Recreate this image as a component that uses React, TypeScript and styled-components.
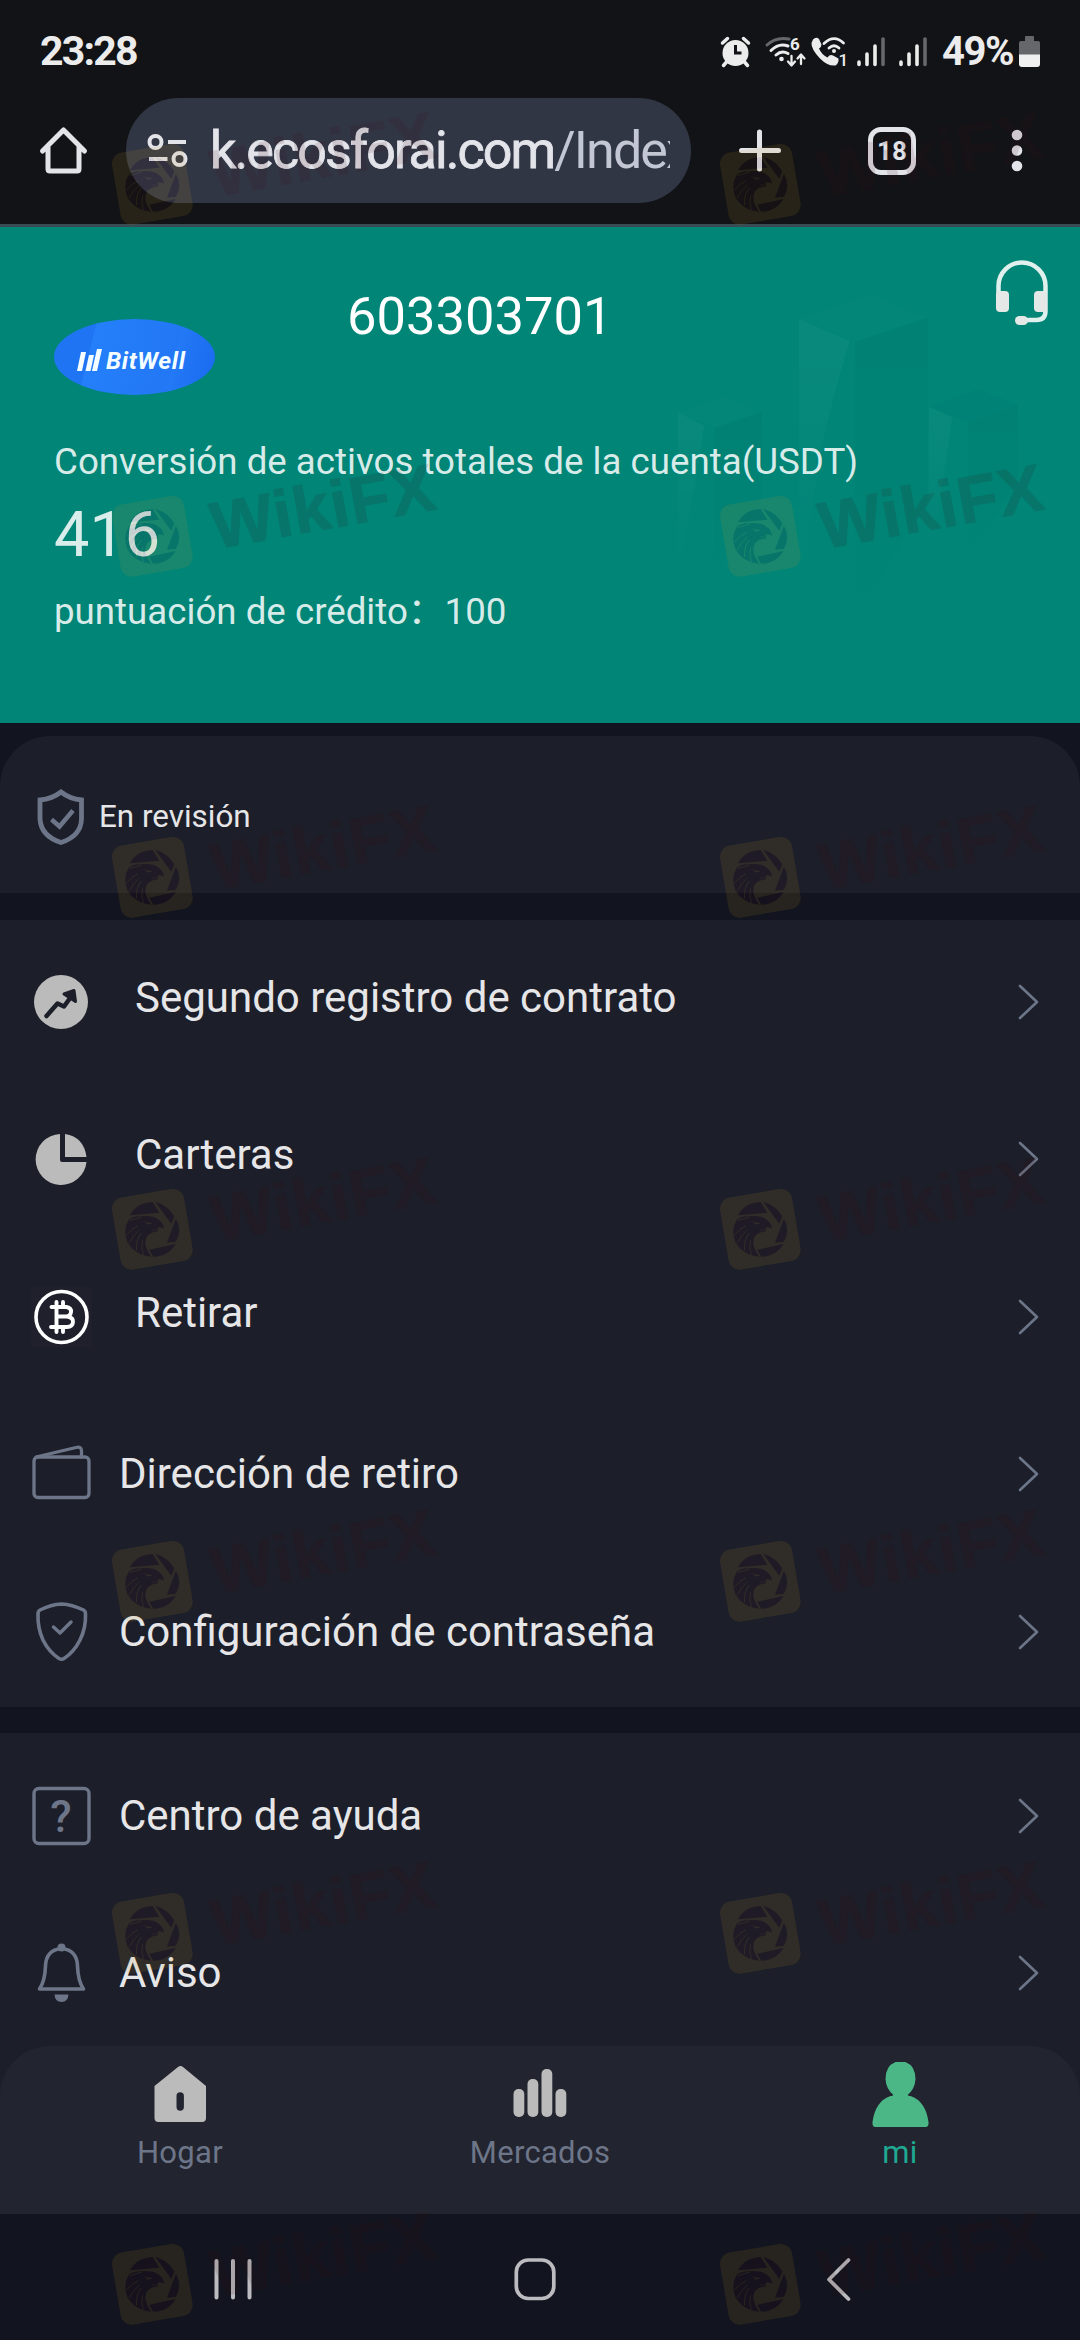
import React from "react";
import styled, { createGlobalStyle } from "styled-components";

const GlobalStyle = createGlobalStyle`
  html, body { margin: 0; padding: 0; background: #12141f; }
  *, *::before, *::after { box-sizing: border-box; }
`;

const slate = "#6d7689";
const light = "#ececec";

const Screen = styled.div`
  position: relative;
  display: flex;
  flex-direction: column;
  width: 1080px;
  height: 2340px;
  overflow: hidden;
  background: #12141f;
  color: #e6e6e8;
  font-family: Roboto, "Noto Sans CJK SC", sans-serif;
`;

/* Every drawing is given by its window on the screen canvas: "x y width height". */
const Svg = styled.svg`
  display: block;
  flex: none;
  overflow: visible;
`;

type ArtProps = { box: string; children: React.ReactNode };
const Art = ({ box, children }: ArtProps) => {
  const [, , w, h] = box.split(" ");
  return (
    <Svg viewBox={box} width={w} height={h} fill="none" strokeLinecap="round" strokeLinejoin="round">
      {children}
    </Svg>
  );
};

/* ---------- system status bar ---------- */

const StatusBar = styled.header`
  display: flex;
  align-items: flex-start;
  height: 98px;
  padding: 36px 40px 0 40px;
  background: #121316;
`;

const Clock = styled.span`
  flex: 1;
  font-size: 41px;
  font-weight: 700;
  line-height: 31px;
  letter-spacing: -1.8px;
  color: ${light};
`;

const StatusGroup = styled.div<{ $gap: number }>`
  display: flex;
  margin-right: ${(p) => p.$gap}px;
`;

const Percent = styled.span`
  width: 77px;
  font-size: 40px;
  font-weight: 700;
  line-height: 31px;
  letter-spacing: -1.4px;
  color: ${light};
`;

const Signal = () => (
  <Art box="856 36 28 32">
    <g strokeWidth="3.6" stroke={light}>
      <path d="M858 62v2.500M866 54v10.500M874 46v18.500" />
      <path d="M882 39v25.500" stroke="#66676a" />
    </g>
  </Art>
);

/* ---------- browser toolbar ---------- */

const Toolbar = styled.div`
  display: flex;
  align-items: center;
  height: 129px;
  padding: 0 57px 21px 38px;
  background: #121316;
  border-bottom: 3px solid #3a4c53;
`;

const AddressPill = styled.div`
  display: flex;
  align-items: center;
  width: 565px;
  height: 105px;
  margin: 0 48px 0 37px;
  padding: 0 21px;
  border-radius: 53px;
  background: #313645;
`;

const Address = styled.div`
  width: 460px;
  margin-left: 21px;
  overflow: hidden;
  white-space: nowrap;
  font-size: 52px;
  line-height: 70px;
  letter-spacing: -1.9px;
  color: #c3c6d3;
`;

const Domain = styled.span`
  color: #e3e3ea;
  -webkit-text-stroke: 0.8px #e3e3ea;
`;

const TabCount = styled.div`
  display: flex;
  align-items: center;
  justify-content: center;
  width: 48px;
  height: 48px;
  margin: 0 95px 0 87px;
  border: 5px solid #e3e3ea;
  border-radius: 13px;
  font-size: 26px;
  font-weight: 700;
  color: #e3e3ea;
`;

/* ---------- account header ---------- */

const Account = styled.section`
  position: relative;
  height: 496px;
  padding-left: 54px;
  background: #008577;
`;

const Skyline = styled.div`
  position: absolute;
  left: 660px;
  top: 50px;
`;

const AccountTop = styled.div`
  position: relative;
  display: flex;
  align-items: flex-start;
  height: 192px;
  padding-right: 31px;
`;

const Brand = styled.div`
  display: flex;
  align-items: center;
  width: 161px;
  height: 76px;
  margin-top: 92px;
  padding: 7px 0 0 22px;
  border-radius: 50%;
  background: linear-gradient(104deg, #1f74f4 24%, #257ffa 24.500%, #2277f5 72%, #2379f6 72.500%, #1a69ee 100%);
`;

const BrandName = styled.span`
  margin-left: 4px;
  font-size: 24.500px;
  font-style: italic;
  font-weight: 700;
  line-height: 26px;
  letter-spacing: 0.6px;
  color: #f4fdff;
`;

const UserId = styled.div`
  flex: 1;
  margin: 59px 0 0 132px;
  font-size: 52.500px;
  line-height: 61px;
  color: #fff;
`;

const Support = styled.div`
  margin-top: 33px;
`;

const AccountText = styled.div<{ $size: number; $line: number; $top: number }>`
  position: relative;
  margin-top: ${(p) => p.$top}px;
  font-size: ${(p) => p.$size}px;
  line-height: ${(p) => p.$line}px;
  white-space: nowrap;
  color: rgba(255, 255, 255, 0.85);
`;

/* ---------- menu ---------- */

const Review = styled.section`
  display: flex;
  align-items: center;
  height: 157px;
  margin-top: 13px;
  padding: 4px 0 0 32px;
  border-radius: 50px 50px 0 0;
  background: #1c1e29;
`;

const ReviewLabel = styled.span`
  margin-left: 7px;
  font-size: 31.400px;
`;

const Menu = styled.nav<{ $height: number; $gap: number; $pad: number }>`
  height: ${(p) => p.$height}px;
  margin-top: ${(p) => p.$gap}px;
  padding-top: ${(p) => p.$pad}px;
  background: #1c1e29;
`;

const Row = styled.div`
  display: flex;
  align-items: center;
  height: 157.500px;
  padding: 0 41px 0 31px;
`;

const RowLabel = styled.span<{ $inset?: boolean }>`
  flex: 1;
  margin-left: ${(p) => (p.$inset ? 43 : 27)}px;
  padding-bottom: ${(p) => (p.$inset ? 8 : 0)}px;
  font-size: 42px;
  line-height: 50px;
`;

const Chevron = () => (
  <Art box="1016 984 23 36">
    <path d="M1020 986l17 16-17 16" stroke={slate} strokeWidth="2.6" />
  </Art>
);

/* ---------- tab bar and system navigation ---------- */

const TabBar = styled.nav`
  position: relative;
  display: grid;
  grid-template-columns: repeat(3, 1fr);
  flex: none;
  height: 168px;
  border-radius: 50px 50px 0 0;
  background: #22242f;
`;

const TabCorner = styled.div`
  background: #1c1e29;
`;

const Tab = styled.div<{ $active?: boolean }>`
  display: flex;
  flex-direction: column;
  align-items: center;
  padding-top: 15px;
  font-size: 31px;
  line-height: 40px;
  letter-spacing: 0.3px;
  color: ${(p) => (p.$active ? "#1fa992" : slate)};
`;

const TabLabel = styled.span`
  margin-top: 4px;
`;

const SystemNav = styled.footer`
  display: flex;
  height: 126px;
  padding: 42px 0 0 212px;
  background: #12141f;
`;

const NavKey = styled.div<{ $gap: number }>`
  margin-right: ${(p) => p.$gap}px;
`;

/* ---------- watermark ---------- */

const Mark = styled.svg<{ $x: number; $y: number }>`
  position: absolute;
  left: ${(p) => p.$x}px;
  top: ${(p) => p.$y - 50}px;
  pointer-events: none;
  overflow: visible;
`;

const blades =
  "M84 187Q103 150 152 147L172 179ZM160 147Q197 156 217 190L208 213ZM222 197Q241 233 222 266L195 269ZM142 290L221 273Q198 311 153 311Z";
const eagle =
  "M80 200Q96 189 116 190Q134 187 156 192Q182 203 187 227Q178 222 166 223Q172 229 166 236Q145 236 135 250Q126 266 133 284Q138 298 147 311Q98 306 76 267Q62 231 80 200Z";
const streaks = "M120 192Q92 200 82 203M108 218Q88 228 74 246M112 231Q92 248 82 270M118 240Q100 262 104 292M122 262Q116 282 124 306";

const Watermark = ({ x, y }: { x: number; y: number }) => {
  const hole = `hole-${x}-${y}`;
  const solid = `solid-${x}-${y}`;
  const shapes = (on: string, off: string) => (
    <>
      <path d={blades} fill={on} />
      <path d={eagle} fill={on} />
      <path d={streaks} stroke={off} strokeWidth="3" fill="none" />
      <path d="M128 205Q138 211 152 209Q144 217 134 213Z" fill={off} />
      <path d="M150 231L172 231" stroke={off} strokeWidth="2" />
    </>
  );
  return (
    <Mark $x={x} $y={y} width="345" height="138" viewBox="0 -50 345 138">
      <defs>
        <mask id={hole} maskUnits="userSpaceOnUse" x="0" y="0" width="400" height="500">
          <rect width="400" height="500" fill="#fff" />
          {shapes("#000", "#fff")}
        </mask>
        <mask id={solid} maskUnits="userSpaceOnUse" x="0" y="0" width="400" height="500">
          {shapes("#fff", "#000")}
        </mask>
      </defs>
      <g transform="scale(.33333) translate(-30 -108)">
        <g mask={`url(#${hole})`}>
          <rect x="41.500" y="119.500" width="219" height="219" rx="34" transform="rotate(-9.700 151 229)" fill="rgba(195,154,40,.12)" />
        </g>
        <g mask={`url(#${solid})`}>
          <rect x="40" y="120" width="220" height="220" fill="rgba(60,12,15,.12)" />
        </g>
      </g>
      <g opacity=".12" transform="translate(103.500 53) rotate(-10.200)">
        <text
          fontFamily="Liberation Sans, Arial, sans-serif"
          fontWeight="700"
          fontSize="66"
          fill="#3c0c0f"
          stroke="#3c0c0f"
          strokeWidth="1.200"
          strokeLinejoin="round"
          textLength="226"
        >
          WikiFX
        </text>
      </g>
    </Mark>
  );
};

const App = () => (
  <Screen>
    <GlobalStyle />
    <StatusBar>
      <Clock>23:28</Clock>
      <StatusGroup $gap={15}>
        <Art box="721 36 29 32">
          <circle cx="735.500" cy="53" r="13" fill={light} />
          <path d="M722.500 43l5-4.500M748.500 43l-5-4.500M726.500 62l-3 3.500M744.500 62l3 3.500" stroke={light} strokeWidth="3.500" />
          <path d="M735.500 45v8h6" stroke="#121316" strokeWidth="3" strokeLinecap="butt" strokeLinejoin="miter" />
        </Art>
      </StatusGroup>
      <StatusGroup $gap={5}>
        <Art box="765 36 41 32">
          <path d="M767 45Q776 36.500 789 39" stroke="#66676a" strokeWidth="3" />
          <path d="M771 50.500Q779 42.500 788 46M776 55Q781.500 50 788 53.500" stroke={light} strokeWidth="3" />
          <circle cx="781.500" cy="59" r="2.300" fill={light} />
          <path d="M791.500 56v9M788 61.500l3.500 4 3.500-4M801 64v-9M797.500 58.500l3.500-4 3.500 4" stroke={light} strokeWidth="2.300" />
          <text x="790" y="50" fontSize="17" fontWeight="700" fill={light}>6</text>
        </Art>
      </StatusGroup>
      <StatusGroup $gap={10}>
        <Art box="810 36 36 32">
          <path d="M812 39.500Q815 36.500 818 39L820.500 44.500Q820.500 47 818 48.500Q820.500 54.500 826.500 57.500Q829 54 832 55.500L837.500 58.500Q838 63 834.500 65.500Q827 66.500 819 58.500Q810 49 810.500 43Z" fill={light} />
          <path d="M823 43.500Q833 34 842.500 43M828 48Q833 43.500 838 48" stroke={light} strokeWidth="2.800" />
          <circle cx="833" cy="51" r="2" fill={light} />
          <text x="837.500" y="65.500" fontSize="17" fontWeight="500" fill={light}>1</text>
        </Art>
      </StatusGroup>
      <StatusGroup $gap={14}>
        <Signal />
      </StatusGroup>
      <StatusGroup $gap={15}>
        <Signal />
      </StatusGroup>
      <Percent>49%</Percent>
      <Art box="1019 36 21 32">
        <path d="M1025 37q0-1 1-1h7q1 0 1 1v4h4q2 0 2 2v12h-21V43q0-2 2-2h4Z" fill="#66676a" />
        <path d="M1019 54.500h21V64q0 3-3 3h-15q-3 0-3-3Z" fill="#f0f0f0" />
      </Art>
    </StatusBar>

    <Toolbar>
      <Art box="38 125 51 51">
        <path d="M42.500 151L63.500 130l21 21M48 147v22q0 2 2 2h27q2 0 2-2v-22" stroke="#e3e3ea" strokeWidth="5" />
      </Art>
      <AddressPill>
        <Art box="147 132 42 38">
          <g stroke="#e3e3ea" strokeWidth="4" strokeLinecap="butt">
            <circle cx="155.500" cy="142" r="6" />
            <path d="M168 142h18M149 159h18.500" />
            <circle cx="179.500" cy="159" r="6" />
          </g>
        </Art>
        <Address>
          <Domain>k.ecosforai.com</Domain>/Index
        </Address>
      </AddressPill>
      <Art box="739 129 42 43">
        <path d="M741.500 150.500h37M759.500 132v37" stroke="#e3e3ea" strokeWidth="5" />
      </Art>
      <TabCount>18</TabCount>
      <Art box="1011 127 12 47">
        <g fill="#e3e3ea">
          <circle cx="1017" cy="135" r="5.300" />
          <circle cx="1017" cy="150.500" r="5.300" />
          <circle cx="1017" cy="166" r="5.300" />
        </g>
      </Art>
    </Toolbar>

    <Account>
      <Skyline>
        <Art box="660 277 380 350">
          <defs>
            <linearGradient id="lit" x1="0" y1="0" x2="0" y2="1">
              <stop offset="0" stopColor="#fff" stopOpacity=".035" />
              <stop offset="1" stopColor="#fff" stopOpacity="0" />
            </linearGradient>
            <linearGradient id="shade" x1="0" y1="0" x2="0" y2="1">
              <stop offset="0" stopColor="#003c30" stopOpacity=".06" />
              <stop offset="1" stopColor="#003c30" stopOpacity="0" />
            </linearGradient>
          </defs>
          <path d="M799 319L871 294L925 318L855 342Z" fill="#fff" fillOpacity=".012" />
          <path d="M799 319L850 341Q834 390 820 455L799 590Z" fill="url(#lit)" />
          <path d="M855 342L928 318V500L855 620Z" fill="url(#shade)" />
          <path d="M678 412L726 396L760 412L714 428Z" fill="#fff" fillOpacity=".01" />
          <path d="M678 412L704 426L696 480L678 575Z" fill="url(#lit)" />
          <path d="M714 428L762 412V500L714 580Z" fill="url(#shade)" />
          <path d="M929 407L978 389L1018 405L968 422Z" fill="#003c30" fillOpacity=".015" />
          <path d="M929 407L952 417Q946 470 929 560Z" fill="url(#lit)" />
          <path d="M968 422L1018 405V480L968 560Z" fill="url(#shade)" />
        </Art>
      </Skyline>
      <AccountTop>
        <Brand>
          <Art box="76 349 26 23">
            <path d="M81 352h5l-4 19h-5ZM89 355h5l-3.500 16h-5ZM97 349h5l-5 22h-5Z" fill="#f4fdff" />
          </Art>
          <BrandName>BitWell</BrandName>
        </Brand>
        <UserId>603303701</UserId>
        <Support>
          <Art box="995 260 54 67">
            <path d="M998.500 298V286a23.500 23.500 0 0 1 47 0V311q0 9-9 9h-13" stroke="#dff0ed" strokeWidth="4.500" strokeLinecap="butt" />
            <rect x="996" y="291" width="13" height="21" rx="4" fill="#e4e8e7" />
            <rect x="1034" y="291" width="13" height="21" rx="4" fill="#e4e8e7" />
            <rect x="1015" y="316" width="13" height="9" rx="4.500" fill="#e4e8e7" />
          </Art>
        </Support>
      </AccountTop>
      <AccountText $size={36.7} $line={50} $top={18}>Conversión de activos totales de la cuenta(USDT)</AccountText>
      <AccountText $size={63} $line={70} $top={13}>416</AccountText>
      <AccountText $size={36.7} $line={50} $top={16.5}>puntuación de crédito：100</AccountText>
    </Account>

    <Review>
      <Art box="32 785 60 64">
        <path d="M61 792Q70 799 81.500 800V819Q81 836 61 842.500Q41 836 40 819V800Q52 799 61 792Z" stroke={slate} strokeWidth="4.800" strokeLinejoin="miter" />
        <path d="M51.500 819.500L59.500 826.500L73 810.500" stroke={slate} strokeWidth="4.500" strokeLinecap="butt" strokeLinejoin="miter" />
      </Art>
      <ReviewLabel>En revisión</ReviewLabel>
    </Review>

    <Menu $height={787} $gap={27} $pad={3}>
      <Row>
        <Art box="31 972 61 60">
          <circle cx="61" cy="1002" r="27" fill="#bbb" />
          <path d="M46.500 1016L57.500 1003.500L64 1006.500L73 994" stroke="#1c1e29" strokeWidth="4.500" />
          <path d="M64 994L74 990.500L75.500 1001.500Z" fill="#1c1e29" stroke="#1c1e29" strokeWidth="3" />
        </Art>
        <RowLabel $inset>Segundo registro de contrato</RowLabel>
        <Chevron />
      </Row>
      <Row>
        <Art box="31 1129 61 60">
          <path d="M60 1134A25.500 25.500 0 1 0 86.500 1162H62Q60 1162 60 1160Z" fill="#bbb" />
          <path d="M65 1134Q84 1137 86.500 1157H65Z" fill="#bbb" />
        </Art>
        <RowLabel $inset>Carteras</RowLabel>
        <Chevron />
      </Row>
      <Row>
        <Art box="32 1287 61 60">
          <rect x="32" y="1287" width="61" height="60" fill="#1f202c" />
          <circle cx="62.500" cy="1317" r="25.500" stroke="#fff" strokeWidth="3.600" />
          <path d="M52.500 1307H67.500Q72.500 1308 72 1312Q71.500 1316.500 67 1316.500H57.500H68Q74.500 1317.500 74 1322Q73.500 1327 68 1327H52M57.500 1302V1332M64 1302V1307M64 1327V1332" stroke="#fff" strokeWidth="3.900" />
        </Art>
        <RowLabel $inset>Retirar</RowLabel>
        <Chevron />
      </Row>
      <Row>
        <Art box="31 1444 61 60">
          <rect x="34" y="1457" width="55" height="40.500" rx="4" stroke={slate} strokeWidth="3.300" />
          <path d="M36 1457L76 1447.500Q81.500 1446 81.500 1451V1457" stroke={slate} strokeWidth="3.300" />
        </Art>
        <RowLabel>Dirección de retiro</RowLabel>
        <Chevron />
      </Row>
      <Row>
        <Art box="31 1602 61 62">
          <path d="M61.500 1605Q72 1605.500 83.500 1611Q85.500 1612 85.500 1615Q86 1629 80 1641Q74 1653 64 1659.500Q61.500 1661 59 1659.500Q49 1653 43 1641Q37.500 1629 38 1615Q38 1612 40 1611Q51 1605.500 61.500 1605Z" stroke={slate} strokeWidth="3.600" />
          <path d="M53.500 1628L60 1634L71 1623" stroke={slate} strokeWidth="3.500" />
        </Art>
        <RowLabel>Configuración de contraseña</RowLabel>
        <Chevron />
      </Row>
    </Menu>

    <Menu $height={313} $gap={26} $pad={4}>
      <Row>
        <Art box="31 1786 61 60">
          <rect x="34" y="1788.500" width="55" height="55" rx="5" stroke={slate} strokeWidth="3.400" />
          <text x="61" y="1831.500" textAnchor="middle" fontSize="44" fontWeight="500" fill={slate}>?</text>
        </Art>
        <RowLabel>Centro de ayuda</RowLabel>
        <Chevron />
      </Row>
      <Row>
        <Art box="31 1943 61 60">
          <path d="M61.500 1948.500Q77 1950 77.500 1966Q78 1981 83.500 1989H39.500Q45 1981 45.500 1966Q46 1950 61.500 1948.500Z" stroke={slate} strokeWidth="3.600" />
          <circle cx="61.500" cy="1947.500" r="4" fill={slate} />
          <path d="M54.500 1994.500H68.500Q68 2002 61.500 2002Q55 2002 54.500 1994.500Z" fill={slate} />
        </Art>
        <RowLabel>Aviso</RowLabel>
        <Chevron />
      </Row>
    </Menu>

    <TabCorner>
      <TabBar>
        <Tab>
          <Art box="151 2061 60 68">
            <path fillRule="evenodd" d="M155.500 2086L179 2067Q181.500 2065 184 2067L207 2086V2118Q207 2122 203 2122H159.500Q155.500 2122 155.500 2118ZM177.500 2096V2107a3.700 3.700 0 0 0 7.400 0V2096a3.700 3.700 0 0 0-7.400 0Z" fill="#bbb" />
          </Art>
          <TabLabel>Hogar</TabLabel>
        </Tab>
        <Tab>
          <Art box="510 2061 60 68">
            <g fill="#bbb">
              <rect x="513.500" y="2089" width="10.800" height="28" rx="5" />
              <rect x="527.500" y="2079" width="10.800" height="38" rx="5" />
              <rect x="541.500" y="2069" width="10.800" height="48" rx="5" />
              <rect x="555.500" y="2089" width="10.800" height="28" rx="5" />
            </g>
          </Art>
          <TabLabel>Mercados</TabLabel>
        </Tab>
        <Tab $active>
          <Art box="870.5 2061 62 68">
            <g fill="#4bb786">
              <path d="M897 2062h10Q917 2066 917 2079Q916.500 2089 909 2095H895Q887.500 2089 887 2079Q887 2066 897 2062Z" />
              <path d="M895 2094h14Q909 2096 912 2096Q927 2101 930 2122Q930.500 2127 927 2127H877Q873.500 2127 874 2122Q877 2101 892 2096Q895 2096 895 2094Z" />
            </g>
          </Art>
          <TabLabel>mi</TabLabel>
        </Tab>
      </TabBar>
    </TabCorner>

    <SystemNav>
      <NavKey $gap={258}>
        <Art box="212 2256 42 46">
          <path d="M216.500 2261v36.500M233 2261v36.500M249.500 2261v36.500" stroke="#bbbbc0" strokeWidth="4" />
        </Art>
      </NavKey>
      <NavKey $gap={267}>
        <Art box="512 2256 46 46">
          <rect x="516.300" y="2260" width="37.500" height="38.500" rx="12" stroke="#bbbbc0" strokeWidth="3.700" />
        </Art>
      </NavKey>
      <NavKey $gap={0}>
        <Art box="825 2256 28 46">
          <path d="M848.500 2260L829 2279.500L848.500 2299" stroke="#bbbbc0" strokeWidth="3.700" />
        </Art>
      </NavKey>
    </SystemNav>

    {[144, 496, 837, 1189, 1541, 1893, 2244].map((y) => (
      <React.Fragment key={y}>
        <Watermark x={112} y={y} />
        <Watermark x={720} y={y} />
      </React.Fragment>
    ))}
  </Screen>
);

export default App;
